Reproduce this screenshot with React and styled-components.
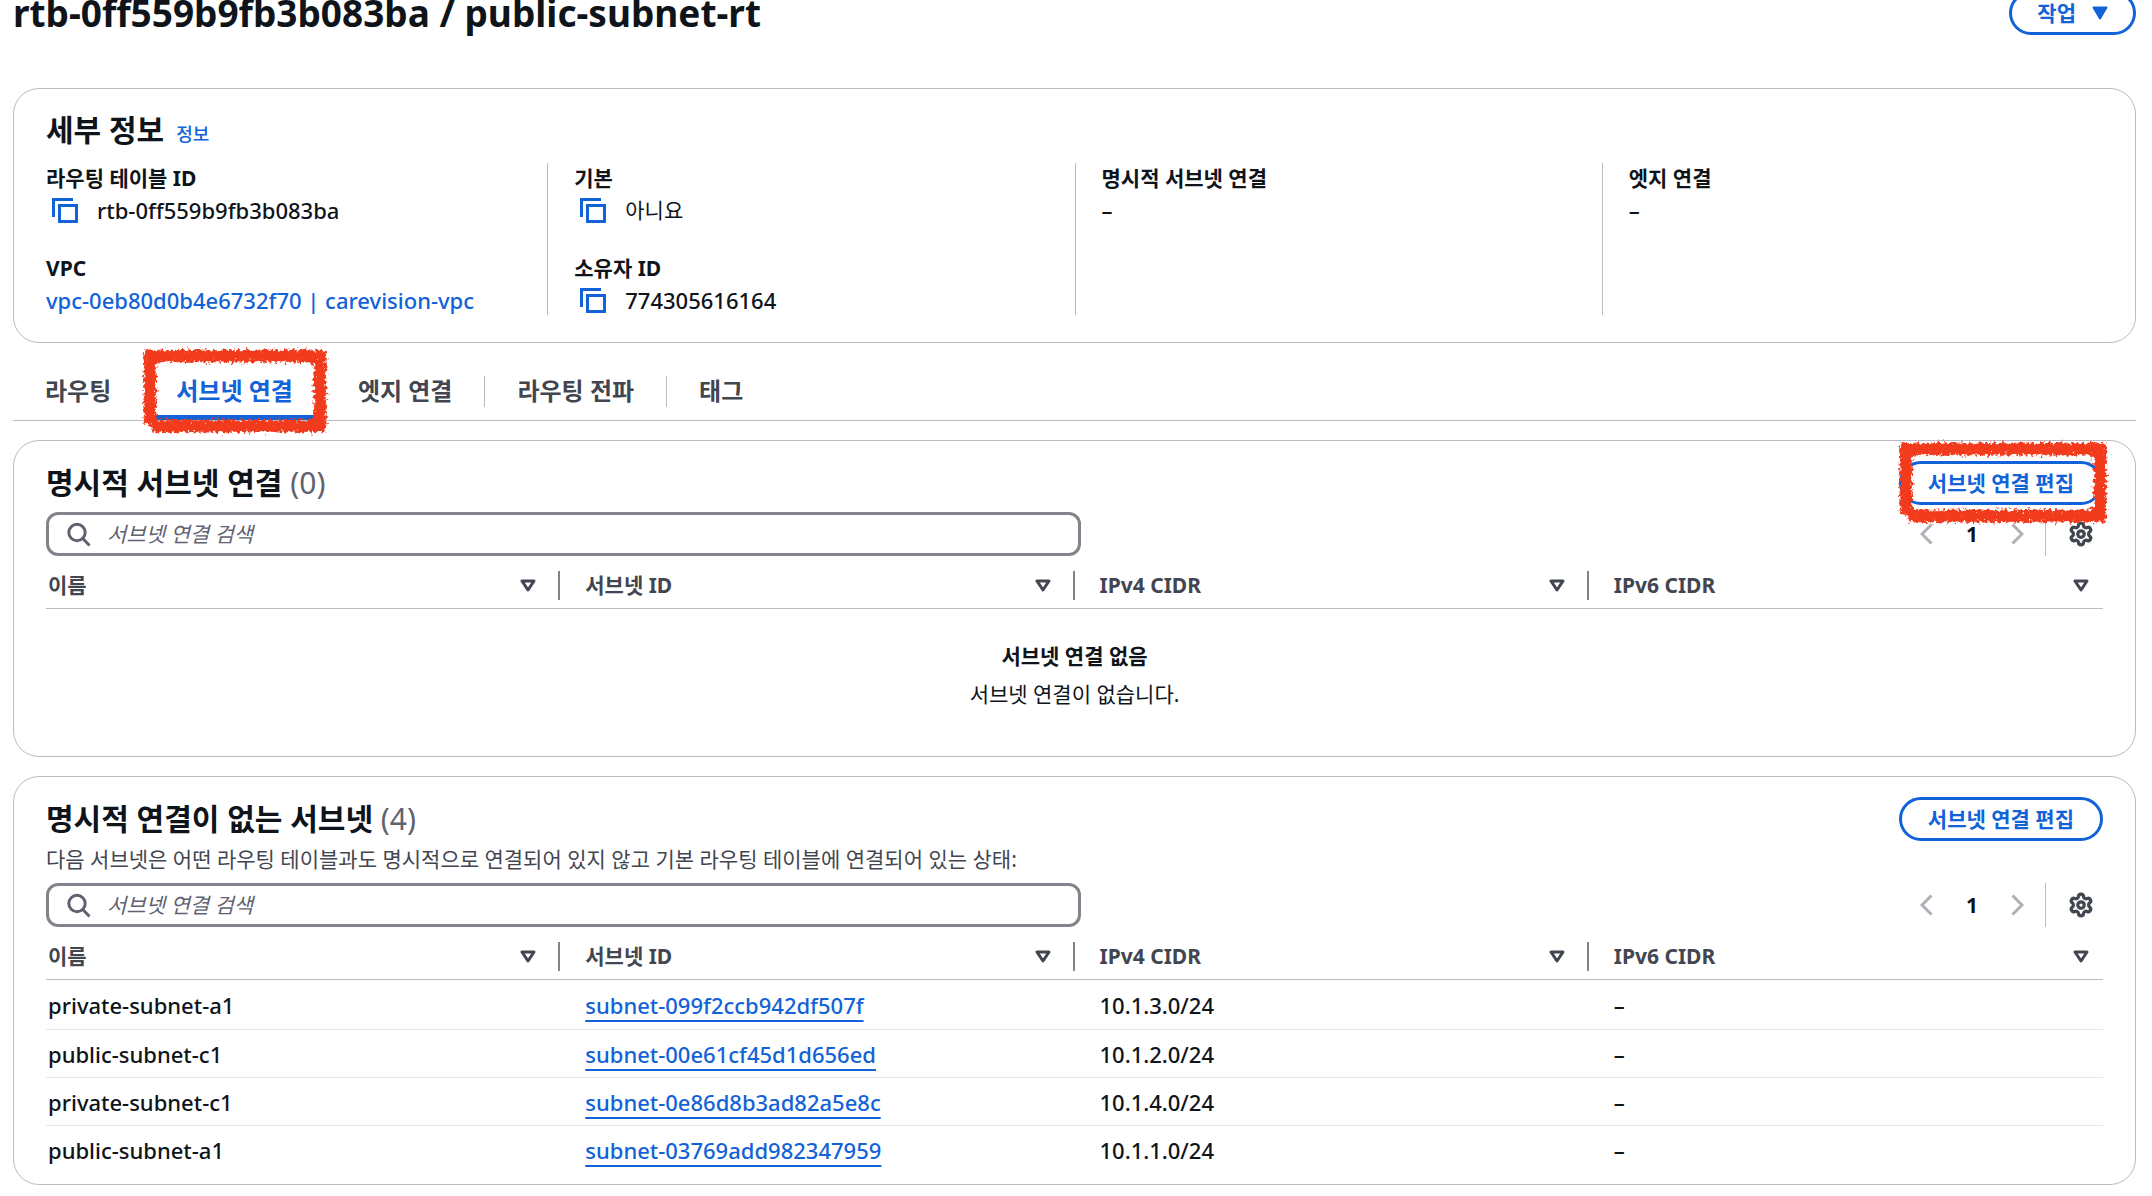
import React, { useId } from "react";
import styled, { createGlobalStyle } from "styled-components";
import { Settings } from "lucide-react";

const color = {
  text: "#0f141a",
  heading: "#424650",
  muted: "#5f6270",
  link: "#1262d8",
  line: "#bcbac6",
  rowLine: "#e6e6ea",
  field: "#84838c",
  disabled: "#b0b0b8",
  marker: "#f23a1c",
};

const GlobalStyle = createGlobalStyle`
  *, *::before, *::after { box-sizing: border-box; }
  body {
    margin: 0;
    background: #fff;
    color: ${color.text};
    font-family: "Noto Sans", "Noto Sans CJK KR", sans-serif;
    font-size: 21px;
    line-height: 30px;
    overflow: hidden;
  }
  h1, h2, h3, p, ul, dl, dd { margin: 0; padding: 0; }
  button, input { font: inherit; color: inherit; }
  button { background: none; border: 0; padding: 0; cursor: pointer; }
  svg { display: block; flex: none; }
`;

/* The page is scrolled a little, so the header runs off the top edge. */
const Page = styled.main`
  margin-top: -9px;
  padding: 0 16px 0 13px;
`;

const PageHeader = styled.header`
  display: flex;
  justify-content: space-between;
  align-items: center;
  margin-bottom: 53px;
`;

const PageTitle = styled.h1`
  font-size: 37px;
  line-height: 44px;
  font-weight: 700;
`;

const PillButton = styled.button`
  display: flex;
  align-items: center;
  gap: 16px;
  height: 44px;
  padding: 0 ${(p) => (p.$menu ? "25px" : "26px")};
  border: 3px solid ${color.link};
  border-radius: 24px;
  color: ${color.link};
  font-weight: 700;
  white-space: nowrap;
`;

const Card = styled.section`
  border: 1px solid ${color.line};
  border-radius: 26px;
  padding: ${(p) => p.$padding};
  & + & { margin-top: 19px; }
`;

const DetailsHeading = styled.div`
  display: flex;
  align-items: baseline;
  gap: 12px;
  padding: 0 26px;
  margin-bottom: 14px;
`;

const SectionTitle = styled.h2`
  font-size: 30px;
  line-height: 38px;
  font-weight: 700;
`;

const Count = styled.span`
  color: ${color.muted};
  font-weight: 400;
`;

const Link = styled.a`
  color: ${color.link};
  text-decoration: ${(p) => (p.$underlined ? "underline" : "none")};
  text-decoration-thickness: 2px;
  text-underline-offset: 6px;
`;

const InfoLink = styled(Link)`
  font-size: 18px;
  font-weight: 500;
`;

const DetailsGrid = styled.div`
  display: grid;
  grid-template-columns: repeat(4, 1fr);
`;

const DetailsColumn = styled.dl`
  display: grid;
  align-content: start;
  gap: 28px;
  padding: 0 26px;
  & + & { border-left: 1px solid ${color.line}; }
`;

const DetailLabel = styled.dt`
  font-weight: 700;
  margin-bottom: 2px;
`;

const DetailValue = styled.dd`
  display: flex;
  align-items: center;
  gap: 19px;
  height: 30px;
  font-size: ${(p) => (p.$latin ? "22px" : "21px")};
  font-weight: ${(p) => (p.$latin ? 500 : 400)};
`;

const CopyButton = styled.button`
  padding-left: 6px;
`;

const TabList = styled.ul`
  display: flex;
  list-style: none;
  margin: 24px 0 19px;
  border-bottom: 1px solid ${color.line};
`;

const TabItem = styled.li`
  position: relative;
  display: flex;
  &:not(:last-child)::after {
    content: "";
    width: 1px;
    height: 31px;
    margin-top: 9px;
    background: ${(p) => (p.$bare ? "transparent" : color.line)};
  }
`;

const Tab = styled.button`
  height: 53px;
  margin: 0 8px;
  padding: 0 24px;
  border-bottom: 5px solid ${(p) => (p.$active ? color.link : "transparent")};
  color: ${(p) => (p.$active ? color.link : color.heading)};
  font-size: 24px;
  font-weight: 700;
`;

const CardHeader = styled.div`
  display: flex;
  justify-content: space-between;
  align-items: center;
  height: 44px;
`;

const Marked = styled.div`
  position: relative;
`;

const Description = styled.p`
  padding-top: 2px;
  color: ${color.heading};
  line-height: 33px;
`;

const Toolbar = styled.div`
  display: flex;
  justify-content: space-between;
  align-items: center;
  height: 44px;
  margin-top: 7px;
`;

const SearchField = styled.label`
  display: flex;
  align-items: center;
  gap: 16px;
  flex: 0 1 1035px;
  height: 44px;
  padding: 0 18px;
  border: 3px solid ${color.field};
  border-radius: 12px;
  color: ${color.muted};
`;

const SearchInput = styled.input`
  flex: 1;
  min-width: 0;
  padding: 0;
  border: 0;
  outline: 0;
  background: none;
  &::placeholder {
    color: ${color.muted};
    font-style: italic;
    opacity: 1;
  }
`;

const Paging = styled.div`
  display: flex;
  align-items: center;
  height: 44px;
  padding-right: 9px;
`;

const PageNumber = styled.button`
  width: 78px;
  font-weight: 700;
`;

const PreferencesDivider = styled.span`
  align-self: stretch;
  width: 1px;
  margin: 0 22px 0 21px;
  background: ${color.line};
`;

const PreferencesButton = styled.button`
  color: ${color.heading};
`;

const Table = styled.table`
  width: 100%;
  table-layout: fixed;
  border-collapse: separate;
  border-spacing: 0;
`;

const HeadCell = styled.th`
  height: 53px;
  padding: 6px 0 0;
  border-bottom: 1px solid ${color.line};
  color: ${color.heading};
  font-weight: 700;
  text-align: left;
`;

const HeadInner = styled.div`
  display: flex;
  justify-content: space-between;
  align-items: center;
  height: 29px;
  padding: 0 22px 0 25px;
  border-right: 2px solid ${color.field};
  ${HeadCell}:first-child & { padding-left: 2px; }
  ${HeadCell}:last-child & { padding-right: 14px; border-right: 0; }
`;

const BodyCell = styled.td`
  height: 48px;
  padding: 0 25px;
  border-bottom: 1px solid ${color.rowLine};
  font-size: 22px;
  font-weight: 500;
  &:first-child { padding-left: 2px; }
  tr:first-child > & { height: 50px; }
  tr:last-child > & { border-bottom: 0; }
`;

const EmptyCell = styled.td`
  padding: 28px 0 33px;
  text-align: center;
  line-height: 38px;
`;

const ScribbleSvg = styled.svg`
  position: absolute;
  z-index: 1;
  left: ${(p) => p.$left}px;
  top: ${(p) => p.$top}px;
  pointer-events: none;
`;

/* Crayon-like red frame drawn over the thing it points out. */
function Scribble({ left, top, width, height }) {
  const id = useId();
  const m = 7;
  return (
    <ScribbleSvg $left={left - 6} $top={top - 6} width={width + 12} height={height + 12} viewBox={`-6 -6 ${width + 12} ${height + 12}`} aria-hidden="true">
      <filter id={id} filterUnits="userSpaceOnUse" x="-6" y="-6" width={width + 12} height={height + 12} colorInterpolationFilters="sRGB">
        <feGaussianBlur in="SourceAlpha" stdDeviation="2.6" result="soft" />
        <feTurbulence type="fractalNoise" baseFrequency="0.34" numOctaves="3" seed="7" result="grain" />
        <feComposite in="soft" in2="grain" operator="arithmetic" k1="0" k2="0.6" k3="0.7" k4="0" result="sum" />
        <feComponentTransfer in="sum" result="mask">
          <feFuncA type="linear" slope="8" intercept="-4.9" />
        </feComponentTransfer>
        <feFlood floodColor={color.marker} />
        <feComposite in2="mask" operator="in" />
      </filter>
      <path
        filter={`url(#${id})`}
        d={`M${m} ${height - 8}V${m}H${width - m}V${height - m}H9`}
        fill="none"
        stroke={color.marker}
        strokeWidth="13"
      />
    </ScribbleSvg>
  );
}

const CopyIcon = () => (
  <svg width="26" height="25" viewBox="0 0 26 25" fill="none" stroke={color.link} strokeWidth="3" aria-hidden="true">
    <path d="M1.5 19V1.5H21" />
    <path d="M7.5 7.5h17v16h-17z" />
  </svg>
);

const CaretIcon = () => (
  <svg width="16" height="14" viewBox="0 0 16 14" fill={color.link} stroke={color.link} strokeWidth="2" strokeLinejoin="round" aria-hidden="true">
    <path d="M1.5 1.5h13L8 12.5z" />
  </svg>
);

const SortIcon = () => (
  <svg width="16" height="13" viewBox="0 0 16 13" fill="none" stroke={color.heading} strokeWidth="3" strokeLinejoin="round" aria-hidden="true">
    <path d="M2 2h12L8 11z" />
  </svg>
);

const SearchIcon = () => (
  <svg width="24" height="25" viewBox="0 0 24 25" fill="none" stroke={color.muted} strokeWidth="3" aria-hidden="true">
    <circle cx="10" cy="10.5" r="8.2" />
    <path d="M15.8 16.5L22.5 23.5" />
  </svg>
);

const ChevronIcon = ({ next }) => (
  <svg width="13" height="22" viewBox="0 0 13 22" fill="none" stroke={color.disabled} strokeWidth="3" aria-hidden="true">
    <path d={next ? "M1.5 1.5L11 11L1.5 20.5" : "M11.5 1.5L2 11L11.5 20.5"} />
  </svg>
);

const details = [
  [
    { label: "라우팅 테이블 ID", value: "rtb-0ff559b9fb3b083ba", copy: true, latin: true },
    { label: "VPC", value: "vpc-0eb80d0b4e6732f70 | carevision-vpc", link: true, latin: true },
  ],
  [
    { label: "기본", value: "아니요", copy: true },
    { label: "소유자 ID", value: "774305616164", copy: true, latin: true },
  ],
  [{ label: "명시적 서브넷 연결", value: "–", latin: true }],
  [{ label: "엣지 연결", value: "–", latin: true }],
];

const tabs = ["라우팅", "서브넷 연결", "엣지 연결", "라우팅 전파", "태그"];
const activeTab = 1;

const columns = ["이름", "서브넷 ID", "IPv4 CIDR", "IPv6 CIDR"];

const subnets = [
  { name: "private-subnet-a1", id: "subnet-099f2ccb942df507f", cidr: "10.1.3.0/24" },
  { name: "public-subnet-c1", id: "subnet-00e61cf45d1d656ed", cidr: "10.1.2.0/24" },
  { name: "private-subnet-c1", id: "subnet-0e86d8b3ad82a5e8c", cidr: "10.1.4.0/24" },
  { name: "public-subnet-a1", id: "subnet-03769add982347959", cidr: "10.1.1.0/24" },
];

function Detail({ label, value, copy, link, latin }) {
  return (
    <div>
      <DetailLabel>{label}</DetailLabel>
      <DetailValue $latin={latin}>
        {copy && (
          <CopyButton type="button" aria-label={`${label} 복사`}>
            <CopyIcon />
          </CopyButton>
        )}
        {link ? <Link href="#vpc">{value}</Link> : <span>{value}</span>}
      </DetailValue>
    </div>
  );
}

function SubnetCard({ title, description, marked, rows }) {
  return (
    <Card $padding="20px 32px 10px">
      <CardHeader>
        <SectionTitle>
          {title} <Count>({rows.length})</Count>
        </SectionTitle>
        <Marked>
          <PillButton type="button">서브넷 연결 편집</PillButton>
          {marked && <Scribble left={0} top={-19} width={208} height={81} />}
        </Marked>
      </CardHeader>
      {description && <Description>{description}</Description>}
      <Toolbar>
        <SearchField>
          <SearchIcon />
          <SearchInput type="text" placeholder="서브넷 연결 검색" aria-label={`${title} 검색`} />
        </SearchField>
        <Paging>
          <button type="button" aria-label="이전 페이지" disabled>
            <ChevronIcon />
          </button>
          <PageNumber type="button" aria-current="page">1</PageNumber>
          <button type="button" aria-label="다음 페이지" disabled>
            <ChevronIcon next />
          </button>
          <PreferencesDivider />
          <PreferencesButton type="button" aria-label="기본 설정">
            <Settings size={26} strokeWidth={3} />
          </PreferencesButton>
        </Paging>
      </Toolbar>
      <Table>
        <thead>
          <tr>
            {columns.map((name) => (
              <HeadCell key={name} scope="col">
                <HeadInner>
                  {name}
                  <button type="button" aria-label={`${name} 정렬`}>
                    <SortIcon />
                  </button>
                </HeadInner>
              </HeadCell>
            ))}
          </tr>
        </thead>
        <tbody>
          {rows.length === 0 ? (
            <tr>
              <EmptyCell colSpan={columns.length}>
                <p><strong>서브넷 연결 없음</strong></p>
                <p>서브넷 연결이 없습니다.</p>
              </EmptyCell>
            </tr>
          ) : (
            rows.map((row) => (
              <tr key={row.id}>
                <BodyCell>{row.name}</BodyCell>
                <BodyCell>
                  <Link $underlined href={`#${row.id}`}>{row.id}</Link>
                </BodyCell>
                <BodyCell>{row.cidr}</BodyCell>
                <BodyCell>–</BodyCell>
              </tr>
            ))
          )}
        </tbody>
      </Table>
    </Card>
  );
}

export default function App() {
  return (
    <>
      <GlobalStyle />
      <Page>
        <PageHeader>
          <PageTitle>rtb-0ff559b9fb3b083ba / public-subnet-rt</PageTitle>
          <PillButton type="button" $menu>
            작업
            <CaretIcon />
          </PillButton>
        </PageHeader>

        <Card $padding="22px 6px 27px">
          <DetailsHeading>
            <SectionTitle>세부 정보</SectionTitle>
            <InfoLink href="#info">정보</InfoLink>
          </DetailsHeading>
          <DetailsGrid>
            {details.map((column, i) => (
              <DetailsColumn key={i}>
                {column.map((item) => (
                  <Detail key={item.label} {...item} />
                ))}
              </DetailsColumn>
            ))}
          </DetailsGrid>
        </Card>

        <TabList role="tablist">
          {tabs.map((name, i) => (
            <TabItem key={name} role="presentation" $bare={i <= activeTab}>
              <Tab type="button" role="tab" aria-selected={i === activeTab} $active={i === activeTab}>
                {name}
              </Tab>
              {i === activeTab && <Scribble left={-1} top={-18} width={184} height={84} />}
            </TabItem>
          ))}
        </TabList>

        <SubnetCard title="명시적 서브넷 연결" marked rows={[]} />
        <SubnetCard
          title="명시적 연결이 없는 서브넷"
          description="다음 서브넷은 어떤 라우팅 테이블과도 명시적으로 연결되어 있지 않고 기본 라우팅 테이블에 연결되어 있는 상태:"
          rows={subnets}
        />
      </Page>
    </>
  );
}
